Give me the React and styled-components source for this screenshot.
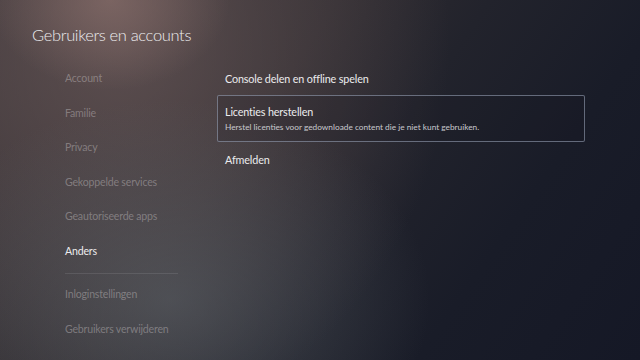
import React from "react";
import styled, { createGlobalStyle } from "styled-components";

const Global = createGlobalStyle`
  html, body { margin: 0; padding: 0; background: #171a26; }
  #root { width: 640px; height: 360px; overflow: hidden; }
`;

const Screen = styled.div`
  width: 640px;
  height: 360px;
  box-sizing: border-box;
  font-family: Lato, "Noto Sans", sans-serif;
  color: #e8e8ea;
  background:
    radial-gradient(ellipse 120px 90px at 110px 0px, rgba(150,120,115,0.55), rgba(150,120,115,0) 100%),
    radial-gradient(ellipse 260px 200px at 170px 300px, rgba(95,102,108,0.55), rgba(95,102,108,0) 100%),
    radial-gradient(ellipse 330px 380px at 120px 40px, rgba(105,88,88,0.75), rgba(105,88,88,0) 100%),
    linear-gradient(125deg, #3b3538 0%, #2e2b30 38%, #22232c 55%, #191c28 75%, #151826 100%);
  display: flex;
  flex-direction: column;
`;

const Title = styled.h1`
  margin: 0;
  padding: 25px 0 0 32px;
  font-size: 16.5px;
  font-weight: 300;
  line-height: 20px;
  letter-spacing: -0.35px;
  color: #ececee;
`;

const Body = styled.div`
  display: flex;
  padding-top: 16px;
`;

const Sidebar = styled.nav`
  width: 152px;
  padding-left: 65px;
  display: flex;
  flex-direction: column;
`;

const NavItem = styled.div`
  height: 34.5px;
  display: flex;
  align-items: center;
  font-size: 10.6px;
  font-weight: 400;
  letter-spacing: -0.2px;
  color: ${p => (p.$active ? "#ececee" : "rgba(205,200,202,0.42)")};
`;

const Divider = styled.div`
  width: 113px;
  height: 1px;
  margin: 5px 0 3px;
  background: rgba(170,170,175,0.18);
`;

const Content = styled.div`
  width: 368px;
  display: flex;
  flex-direction: column;
`;

const Option = styled.div`
  box-sizing: border-box;
  min-height: ${p => (p.$focused ? "47px" : "34px")};
  padding: 0 7px;
  display: flex;
  flex-direction: column;
  justify-content: center;
  border: 1px solid ${p => (p.$focused ? "rgba(150,160,180,0.6)" : "transparent")};
  border-radius: 2px;
  background: ${p => (p.$focused ? "rgba(20,22,34,0.18)" : "transparent")};
`;

const OptionLabel = styled.div`
  font-size: 10.8px;
  line-height: 15px;
  letter-spacing: -0.15px;
  color: #ececee;
`;

const OptionDesc = styled.div`
  font-size: 8.3px;
  line-height: 12px;
  margin-top: 2px;
  color: #c8c9cd;
`;

const navItems = [
  "Account",
  "Familie",
  "Privacy",
  "Gekoppelde services",
  "Geautoriseerde apps",
];

export default function App() {
  return (
    <>
      <Global />
      <Screen>
        <Title>Gebruikers en accounts</Title>
        <Body>
          <Sidebar>
            {navItems.map(n => (
              <NavItem key={n}>{n}</NavItem>
            ))}
            <NavItem $active>Anders</NavItem>
            <Divider />
            <NavItem>Inloginstellingen</NavItem>
            <NavItem>Gebruikers verwijderen</NavItem>
          </Sidebar>
          <Content>
            <Option>
              <OptionLabel>Console delen en offline spelen</OptionLabel>
            </Option>
            <Option $focused>
              <OptionLabel>Licenties herstellen</OptionLabel>
              <OptionDesc>
                Herstel licenties voor gedownloade content die je niet kunt gebruiken.
              </OptionDesc>
            </Option>
            <Option>
              <OptionLabel>Afmelden</OptionLabel>
            </Option>
          </Content>
        </Body>
      </Screen>
    </>
  );
}
